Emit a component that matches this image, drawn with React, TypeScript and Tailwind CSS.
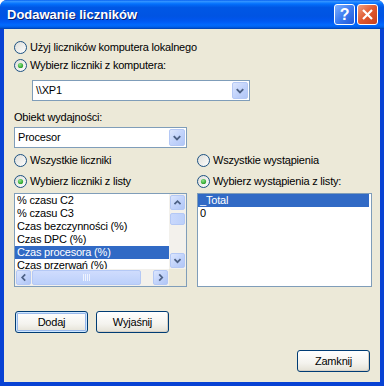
import React from "react";

function Radio({ checked }: { checked?: boolean }) {
  return (
    <svg width="13" height="13" viewBox="0 0 13 13" className="shrink-0">
      <defs>
        <linearGradient id="rfill" x1="0" y1="0" x2="1" y2="1">
          <stop offset="0" stopColor="#dcdcd7" />
          <stop offset="1" stopColor="#ffffff" />
        </linearGradient>
        <radialGradient id="rdot" cx="0.4" cy="0.35" r="0.7">
          <stop offset="0" stopColor="#8ee58a" />
          <stop offset="1" stopColor="#1f9a1f" />
        </radialGradient>
      </defs>
      <circle cx="6.5" cy="6.5" r="6" fill="url(#rfill)" stroke="#1c5180" strokeWidth="1" />
      {checked && <circle cx="6.5" cy="6.5" r="2.6" fill="url(#rdot)" />}
    </svg>
  );
}

function RadioRow({ label, checked }: { label: string; checked?: boolean }) {
  return (
    <div className="flex items-center gap-[3px] h-[13px]">
      <Radio checked={checked} />
      <span className="text-[11px] leading-[13px] text-black whitespace-nowrap">{label}</span>
    </div>
  );
}

function Arrow({ dir }: { dir: "up" | "down" | "left" | "right" }) {
  const d = {
    down: "M4 6 L7.5 9.5 L11 6",
    up: "M4 9.5 L7.5 6 L11 9.5",
    left: "M9.5 4 L6 7.5 L9.5 11",
    right: "M6 4 L9.5 7.5 L6 11",
  }[dir];
  return (
    <svg width="15" height="15" viewBox="0 0 15 15">
      <path d={d} fill="none" stroke="#4d6185" strokeWidth="2" />
    </svg>
  );
}

function BlueBtn({ dir, className }: { dir: "up" | "down" | "left" | "right"; className?: string }) {
  return (
    <div
      className={
        "flex items-center justify-center rounded-[2px] border border-[#b4c8f5] bg-[linear-gradient(135deg,#dce6fd_0%,#c3d4fb_50%,#b1c6f6_100%)] " +
        (className ?? "")
      }
    >
      <Arrow dir={dir} />
    </div>
  );
}

function Combo({ value, className }: { value: string; className: string }) {
  return (
    <div className={"flex items-center h-[21px] border border-[#7f9db9] bg-white " + className}>
      <span className="flex-1 pl-[3px] text-[11px] leading-[13px] text-black">{value}</span>
      <BlueBtn dir="down" className="w-[16px] h-[17px] mr-[1px]" />
    </div>
  );
}

function Button({ label, primary }: { label: string; primary?: boolean }) {
  return (
    <div
      className={
        "w-[73px] h-[22px] flex items-center justify-center rounded-[3px] border border-[#003c74] bg-[linear-gradient(180deg,#ffffff_0%,#f4f3ee_60%,#e4e1d5_100%)] text-[11px] text-black " +
        (primary
          ? "shadow-[inset_0_0_0_1px_#cee7ff,inset_0_0_0_2px_#98b8ea]"
          : "shadow-[inset_-1px_-1px_0_#d6d0c5]")
      }
    >
      {label}
    </div>
  );
}

const counters = [
  "% czasu C2",
  "% czasu C3",
  "Czas bezczynności (%)",
  "Czas DPC (%)",
  "Czas procesora (%)",
  "Czas przerwań (%)",
];

export default function App() {
  return (
    <div className="w-[384px] h-[386px] bg-white tracking-[-0.2px] [font-family:'Liberation_Sans',Arial,sans-serif]">
      <div className="w-full h-full flex flex-col rounded-t-[7px] bg-[#0842d4] overflow-hidden">
        <div className="h-[29px] shrink-0 flex items-center pl-[7px] pr-[6px] bg-[linear-gradient(180deg,#0058ee_0%,#3593ff_4%,#288eff_7%,#127dff_10%,#036ffc_14%,#0262ee_20%,#0057e5_26%,#0054e3_56%,#0055eb_66%,#005bf5_76%,#026afe_86%,#0062ef_92%,#0052d6_96%,#0040ab_100%)]">
          <span className="flex-1 text-white font-bold text-[13px] tracking-normal [text-shadow:1px_1px_0_#0a1e6e]">
            Dodawanie liczników
          </span>
          <div className="flex gap-[2px]">
            <div className="w-[21px] h-[21px] rounded-[3px] border border-white bg-[linear-gradient(135deg,#7fb0ff_0%,#3d7cf0_50%,#2258d8_100%)] flex items-center justify-center text-white font-bold text-[16px] leading-none">
              ?
            </div>
            <div className="w-[21px] h-[21px] rounded-[3px] border border-white bg-[linear-gradient(135deg,#f0a080_0%,#e0582e_50%,#c8401c_100%)] flex items-center justify-center">
              <svg width="13" height="13" viewBox="0 0 13 13">
                <path d="M2 2 L11 11 M11 2 L2 11" stroke="white" strokeWidth="2.2" />
              </svg>
            </div>
          </div>
        </div>
        <div className="flex-1 mx-[4px] mb-[4px] bg-[#ece9d8] flex flex-col pl-[10px] pr-[8px] pt-[12px]">
          <RadioRow label="Użyj liczników komputera lokalnego" />
          <div className="mt-[5px]">
            <RadioRow label="Wybierz liczniki z komputera:" checked />
          </div>
          <Combo value="\\XP1" className="mt-[8px] ml-[18px] w-[218px]" />
          <div className="mt-[10px] h-[13px] text-[11px] leading-[13px] text-black">Obiekt wydajności:</div>
          <Combo value="Procesor" className="mt-[3px] w-[173px]" />
          <div className="mt-[6px] flex gap-[10px]">
            <div className="w-[173px] flex flex-col">
              <RadioRow label="Wszystkie liczniki" />
              <div className="mt-[8px]">
                <RadioRow label="Wybierz liczniki z listy" checked />
              </div>
              <div className="mt-[5px] h-[94px] border border-[#7f9db9] bg-white flex flex-col">
                <div className="flex h-[75px]">
                  <div className="flex-1 overflow-hidden">
                    {counters.map((c, i) => (
                      <div
                        key={c}
                        className={
                          "h-[13px] pl-[2px] text-[11px] leading-[13px] whitespace-nowrap " +
                          (i === 4 ? "bg-[#316ac5] text-white" : "text-black")
                        }
                      >
                        {c}
                      </div>
                    ))}
                  </div>
                  <div className="w-[17px] bg-[#f3f1ec] flex flex-col p-[1px]">
                    <BlueBtn dir="up" className="h-[15px]" />
                    <div className="flex-1">
                      <div className="mt-[3px] h-[12px] rounded-[2px] border border-[#b4c8f5] bg-[linear-gradient(90deg,#c9d8fc_0%,#bcd0fa_100%)]" />
                    </div>
                    <BlueBtn dir="down" className="h-[15px]" />
                  </div>
                </div>
                <div className="flex h-[17px]">
                  <div className="flex-1 bg-[#f3f1ec] flex p-[1px]">
                    <BlueBtn dir="left" className="w-[15px]" />
                    <div className="flex-1 flex">
                      <div className="ml-[1px] w-[109px] rounded-[2px] border border-[#b4c8f5] bg-[linear-gradient(180deg,#cfdcfd_0%,#bcd0fa_100%)] flex items-center justify-center">
                        <svg width="8" height="7" viewBox="0 0 8 7">
                          <path d="M0.5 0 V7 M2.5 0 V7 M4.5 0 V7 M6.5 0 V7" stroke="#eef3fe" strokeWidth="1" />
                        </svg>
                      </div>
                    </div>
                    <BlueBtn dir="right" className="w-[15px]" />
                  </div>
                  <div className="w-[17px] bg-[#ece9d8]" />
                </div>
              </div>
            </div>
            <div className="w-[175px] flex flex-col">
              <RadioRow label="Wszystkie wystąpienia" />
              <div className="mt-[8px]">
                <RadioRow label="Wybierz wystąpienia z listy:" checked />
              </div>
              <div className="mt-[5px] h-[94px] border border-[#7f9db9] bg-white pr-[2px]">
                <div className="h-[13px] pl-[2px] bg-[#316ac5] text-white text-[11px] leading-[13px]">_Total</div>
                <div className="h-[13px] pl-[2px] text-black text-[11px] leading-[13px]">0</div>
              </div>
            </div>
          </div>
          <div className="mt-[24px] ml-[1px] flex gap-[8px]">
            <Button label="Dodaj" primary />
            <Button label="Wyjaśnij" />
          </div>
          <div className="mt-[17px] self-end mr-[2px]">
            <Button label="Zamknij" />
          </div>
        </div>
      </div>
    </div>
  );
}
